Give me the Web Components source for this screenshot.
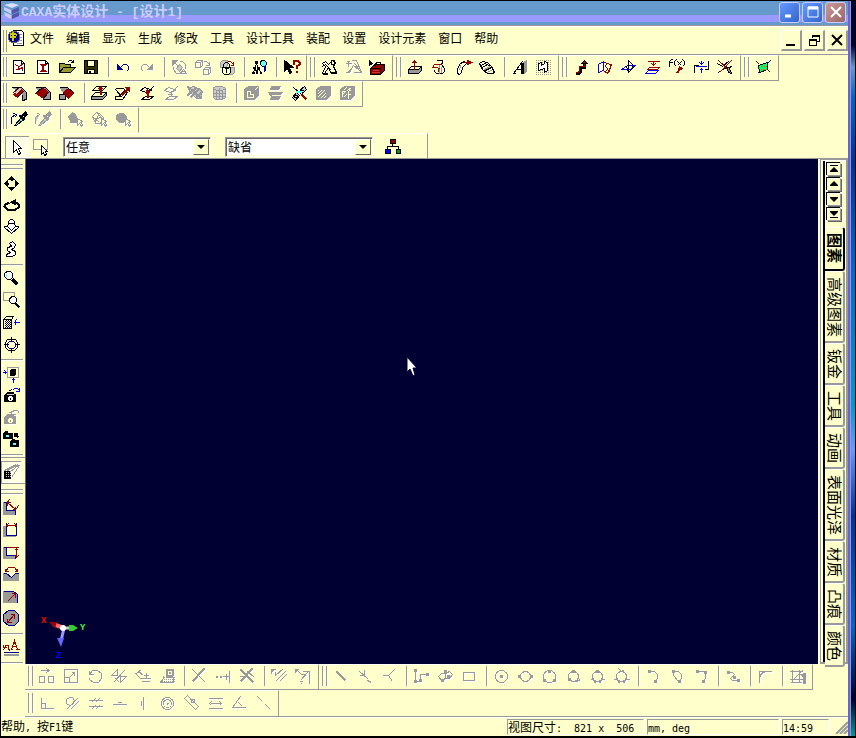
<!DOCTYPE html>
<html lang="zh-CN">
<head>
<meta charset="utf-8">
<title>CAXA实体设计 - [设计1]</title>
<style>
html,body{margin:0;height:100%}
body{background:#000;font:12px/16px "Noto Sans CJK SC",sans-serif;color:#000;overflow:hidden}
</style>
</head>
<body>
<cad-app></cad-app>
<script>
const COLORS={K:'currentColor',R:'#990000',B:'#000099',G:'#999999',W:'#ffffff',C:'#66ffff',Y:'#999933',N:'none',L:'#cccccc',P:'#ffffcc',U:'#0000ff',E:'#00ff66',D:'#333300',S:'#cc3333'};
/* Each icon is a list of "path|stroke|fill|width" strokes on an 18-cell grid. */
const ICONS={
new:['M3 2H11L14 5V15H3Z|K|W','M11 2V5H14','M5 6L8 8L11 7L12 5M8 8V11H5M8 11L12 9V12|R'],
new2:['M3 2H11L14 5V15H3Z|K|W','M11 2V5H14','M5 6H12M6 7H11M8 7V11M9 7V11M6 12H11M5 13H12|R'],
open:['M1 14V5H6L7 6H12V9|K|Y','M1 14L5 9H17L12 14Z|K|Y','M9 4L11 2H13L15 4M15 1V4H12'],
save:['M2 2H15V15H2Z|K|D','M5 2H12V8H5Z|K|P','M5 11H12V15H5Z|K|P','M7 12V14|K|N|2'],
undo:['M3 6V11H8Z|B|B','M6 9L9 6H12L14 8V11L12 13|B'],
redo:['M14 6V11H9Z|K|K','M11 9L8 6H5L3 8V11L5 13'],
orbit:['M2 2H7L2 7Z|K|K','M5 5L14 14M9 3H12L15 6V10L14 11M3 8V11L6 15H9L11 13M13 11L16 15H10Z','M6 10L9 13L12 9L9 6Z|K|L'],
boxes:['M1 4L3 2H8V7L6 9H1ZM1 4H6V9M6 4L8 2M9 11L11 9H16V14L14 16H9ZM9 11H14V16M14 11L16 9M9 3H12L15 6M15 3V7H11'],
boxlock:['M2 4L4 2H9V7L7 9H2ZM11 9H16V14L14 16H10V10|G|L','M9 3H12L15 6M15 3V7H12|R','M5 9V6L7 4H9L11 6V9|K','M4 9H12V14L10 16H6L4 14Z|K|P','M6 10H10M8 10V14'],
tree:['M5 3H7V5H5ZM3 9H5V10H3ZM7 9H9V10H7ZM2 14H4V15H2ZM6 14H7V15H6ZM10 14H11V15H10Z|K|K','M6 5L3 14M6 5L10 14M4 10L7 14M8 10L6 14|K','M11 2H14L16 4V6L14 8H12L10 6V4Z|K|C','M14 8L15 13|B|N|2'],
help:['M2 2V13L5 10L7 15L9 14L7 9H11Z|K|K','M11 6V3L13 2H15L17 4V6L14 8V10M14 12V14|R|N|2'],
vise:['M2 5L5 3L8 6L12 2L15 4L13 8L16 14H10L8 9L4 15H2L5 8Z|K|P','M2 8L5 6L11 12M11 2H14V6H11Z','M2 15H7M10 14H16|K|N|2'],
vise2:['M2 3H5M1 5H7M4 2V8M7 2L12 2L17 14L14 11L9 7L5 14H1M10 5L15 11M3 14L8 9M9 14H16'],
redbox:['M1 2L4 5L1 7Z|K|K','M2 10L6 6H16V12L12 16H2Z|K|R','M2 10H12V16M12 10L16 6','M6 8L8 4H12L13 7','M4 12H10M3 14H11|S'],
extrude:['M2 11L5 8H15V12L12 15H2Z|K|G','M2 11L5 8H15L12 11Z|K|P','M8 11V2M5 5L8 2L11 5M6 4H10|R'],
spin:['M6 2H12V4L11 6L14 10V13L12 15H6L4 13V11|K|P','M9 5V15M11 8V14|G','M10 6H4L2 9H7L10 11M8 9V13|R'],
sweep:['M3 15V10L6 5L10 3L12 5L8 9L7 14L5 16Z|K|P','M6 7L5 12|G','M9 4H15M13 2L17 4L13 6Z|R'],
loft:['M1 5L4 3L9 4L13 8L16 14L14 15H9L4 11Z|K|P','M3 7L6 5L9 6M4 9L9 6L12 8M7 12L13 9|K','M6 11L12 8M9 14L14 11|G'],
text:['M2 15H5M3 15L12 3L13 4V15M10 15H14M6 11H12','M12 4V15M11 5V14','M13 4L16 2V13L14 15|G|G'],
emboss:['M1 2H17M1 4H17M1 6H17M1 8H17M1 10H17M1 12H17M1 14H17M1 16H17|G|N|1|dash','M4 5L7 4V7L10 5V3L13 4V12L10 14V10L4 12Z|K|W'],
curve:['M3 15H6L8 13V9H12V4|K|N|3','M3 14H6L7 12V8H12V5|R|N|1','M9 5L12 2L15 5Z|K|R'],
sheet:['M2 6L7 3V12L2 14Z|U|P','M7 3L10 5L15 6L11 15L7 12|R|P','M10 5L9 8L11 10L10 13M15 6L12 15|R'],
plane:['M1 11H10L15 7H7Z|U','M8 14V2M8 2L12 6V10L8 14M6 8L8 14|K'],
offset:['M3 3H15M9 3V7M7 5L9 7L11 5|R','M3 11L5 9H15L13 11Z|R|P','M1 15L4 12H14L11 15Z|U|P'],
fx:['M1 8V3L3 1H4M0 4H4M8 1L6 3V6L8 8M9 3L13 7M13 3L9 7M14 1L16 3V6L14 8|K','M7 14H10V10H13M11 8L14 10L11 12Z|R|R'],
mid:['M2 14V7H6M12 11H16V2|K','M3 8H14|U','M9 2V6M7 4L9 6L11 4M9 14V10M7 12L9 10L11 12|U'],
trimc:['M1 5L6 8L13 2M2 14L8 10L16 8|K','M2 2L14 13M15 2L3 14|R','M10 8L13 10L15 15L12 14Z|K|Y'],
green:['M2 3L5 6M16 14L13 11|R','M16 2L13 5M3 15L6 12|U','M4 7L13 4V11L5 14Z|K|E','M6 8H12M6 11H12|Y'],
blend:['M1 3H11L16 8V15L12 16V10|K|G','M3 10L9 3L13 7L7 13Z|R|R','M2 9L8 3H11M7 13L13 7','M5 9L10 4|L|N|2'],
chamfer:['M1 3H11L16 8V15H9V13|K|G','M2 9L8 3L14 8L9 14Z|R|R','M1 9L8 3M9 14L14 8'],
shell:['M1 3H9L15 8L10 14L5 9M1 10H7V15H1Z|K|G','M5 8L10 4L15 9L10 14Z|R|R','M1 3H9L15 8'],
pull:['M1 12L5 8H16V11L12 15H1Z|K|G','M1 12L5 8H16L12 12Z|K|P','M2 6L6 2H16L12 6Z|K|P','M10 10V3M8 5L10 3L12 5|R|N|2'],
tilt:['M1 4H9L13 8L8 15H1V12H7L1 5M4 12L10 6L13 9|K|P','M7 11L14 4|R|N|2','M11 3H15V7Z|R|R'],
match:['M2 6L6 3L12 5L15 2M2 6L8 8L14 5M3 15L7 12H15L11 15Z|K|P','M9 13V6M7 9L9 6L11 9|R|N|2'],
match2:['M2 6L6 3L12 5L15 2M2 6L8 8L14 5M3 15L7 12H15L11 15ZM9 12V7M5 10H10'],
hatch:['M2 4L7 2L15 6V14H10L4 8Z|K|L','M1 2L15 14M1 11L10 3M4 13L13 4M9 14L16 7|K|N|2'],
cyl:['M3 3L6 2H12L15 4V13L12 15H5L3 13Z|K|L','M3 4L6 6H12L15 4M3 9H15M6 6V14M9 3V15M12 6V14M3 12H15'],
shellL:['M2 5L6 2H16V11L12 15H2Z|K|K','M5 7H8V10H11V13H5Z|P|N|1','M12 6L15 3|P'],
layers:['M5 2H14L12 5H4ZM2 8H16L13 11H4ZM5 12H14L12 15H4Z|K|K','M4 7H14M5 11H14|P'],
satellite:['M2 13L6 8L9 11L5 16ZM10 5L14 2L16 5L12 9Z|K|L','M3 12L7 14M4 10L8 12M11 5L14 7|K','M3 3L15 13|K','M6 7L12 8|C|N|2','M11 10L16 15|R|N|2'],
cubeh:['M2 5L6 2H16V11L12 15H2Z|K|K','M3 7L4 6M3 10L7 6M3 13L10 6M6 14L11 9M9 14L11 12|P'],
cubee:['M2 5L6 2H16V11L12 15H2Z|K|K','M4 12V7H7M4 10L7 7M5 13L8 10M10 6V14M10 6H12M10 10H12M8 3L5 6M13 3L9 6|P'],
dropper:['M1 13V7M1 7L5 4M3 3L6 4L5 7|B','M4 15L11 7L13 9L6 15Z|K|C','M9 5L14 10M11 6L15 2L16 4L13 8|K|N|2'],
dropper2:['M1 13V7L5 4M3 3L6 4M4 15L11 7L13 9L6 15Z|K|L','M9 5L14 10M11 6L15 2L16 4L13 8|K|N|2'],
pick1:['M2 6L6 2L9 4L10 8L12 9L10 12H4V10Z|K|K','M11 8V15L13 13L15 16L16 14L14 12L16 11Z|K|P'],
pick2:['M2 6L6 2L9 3L13 7L10 13H5Z|K|P','M2 6L9 12M6 2L12 8M9 3L4 12M12 7L5 8','M11 8V15L13 13L15 16L16 14L14 12L16 11Z|K|P'],
pick3:['M2 5L5 3H9L12 6V9L9 12H5L2 9Z|K|K','M11 8V15L13 13L15 16L16 14L14 12L16 11Z|K|P'],
pointer:['M5 2V14L8 11L10 16L12 15L10 10H13Z|K|W'],
boxsel:['M1 1H15V11H1Z|G','M9 7V16L11 14L12 17L14 16L13 13H15Z|K|W'],
net:['M6 1H11V5H6Z|K|R','M8 5V8M3 11V8H14V11','M1 11H6V15H1Z|K|U','M12 11H16V15H12Z|K|#009900'],
pan:['M9 3V6M9 12V15M3 9H6M12 9H15|K|N|2','M6 5L9 2L12 5ZM6 13L9 16L12 13ZM5 6L2 9L5 12ZM13 6L16 9L13 12Z|K|K'],
rotate:['M7 6L3 8L2 10L5 13H13L16 11V8L14 6|K|N|2','M8 6L13 3V8Z|K|K'],
zoomfwd:['M6 5V3L8 1H10L12 3V5Z|K|W','M6 5L5 8H2V9L9 15L16 9V8H13L12 5|K|W','M6 9L9 12L12 9'],
walk:['M7 3L10 1L13 4L12 7L9 9L13 11V14L10 16H4V14L8 12L5 10V7L9 6L8 4Z|K|W'],
zoom:['M3 3L5 2H8L10 4V8L8 10H5L2 7V4Z|K|W','M4 4V7|C','M10 10L15 15|K|N|3'],
zoombox:['M1 1H12V9H1Z|G','M8 6L10 5H12L14 7V10L12 12H9L7 10V8Z|K|W','M13 12L17 16|K|N|2'],
look:['M1 6L4 3H11L9 6V15H1Z|K|P','M1 6H9','M2 8H9M2 10H9M2 12H9M2 14H9|B|N|1|dash','M3 7H8M3 9H8M3 11H8M3 13H8|K|N|1|dash','M12 9H17M14 6L12 9L14 12|U'],
target:['M9 1V6M9 12V17M1 9H6M12 9H17|K','M5 4H13L15 7V12L12 15H6L3 12V7Z|K','M7 6H11L13 8V11L11 13H7L5 11V8Z|B'],
camin:['M5 3H16V13H5Z|G','M8 6L10 5H13V10L11 11H8Z|K|K','M0 8H4M2 6L4 8L2 10M11 14V18M9 16L11 14L13 16|U'],
cam:['M2 9L5 6H11V8H13V15H2ZM7 4L10 3|K|K','M5 11L7 9H9L11 11V13L9 15H7L5 13Z|K|W','M8 11V13','M4 8H11|L','M10 4L12 2H15L17 4M17 1V5H13|U'],
cam2:['M2 9L5 6H11V8H13V15H2ZM7 4L10 3|K|K','M5 11L7 9H9L11 11V13L9 15H7L5 13Z|K|P','M8 11V13','M17 5L15 2H11L10 4M9 2V6H13'],
camswap:['M1 3L3 1H5V3H10V8H1ZM8 11L10 9H12V10H16V16H8Z|K|K','M3 4H7V7H3ZM10 12H14V15H10Z|K|C','M12 3L16 7M12 3H15M12 3V6|K|N|2'],
spot:['M2 8H8V15H2Z|K|K','M3 9H8M3 11H8M3 13H8|L|N|1|dash','M2 7L14 1M8 8L17 1M9 14L17 2M5 7L16 1|G'],
dim1:['M1 3H4V11H13V15H1Z|G|G','M1 3H4V11H13V15|B','M5 3L13 10M5 6V3H8M13 7V10H10M7 0L4 4M16 6L12 12|R'],
dim2:['M1 5H4V14H13V15H1Z|G|G','M4 14V1M14 14V1M4 14H14|B','M4 4H14M6 2L4 4L6 6M12 2L14 4L12 6|R'],
dim3:['M1 4H4V12H13V15H1Z|G|G','M1 4H4V12H13V15|B','M4 4H16M14 5V14M12 7L14 5L16 7M12 12L14 14L16 12|R'],
dim4:['M1 8H4L9 12L13 8H16V15H1Z|G|G','M1 8H4L9 12L13 8H16|B','M3 6L6 2H12L15 6M3 3V6H6M15 3V6H12|R'],
rad:['M1 4H11L15 7V15H1Z|G|G','M1 4H11L15 7V15|B','M5 14L13 6M9 6H13V10|R'],
dia:['M6 1H12L16 5V12L12 16H6L1 12V5Z|B|G','M5 13L12 5M8 5H12V9M5 9V13H9|R'],
note:['M1 14H16|B','M1 16H16|G|N|2','M1 12L3 7M1 6V9H4M3 7H6V11L8 12M8 11H10M9 11L12 2L15 11M10 8H14M13 11H17M12 2V5|R'],
move:['M1 9H6V15H1ZM10 9H15V15H10ZM2 3H10M8 1L11 3L8 5'],
scale:['M2 2H15V15H2ZM2 10H7V15M7 10L12 5M9 5H12V8'],
rot:['M3 3V7H7M3 7L6 3H11L15 6V11L12 15H7L3 12V10'],
mirror:['M1 8L7 2V8ZM10 15L16 9H10ZM3 15L14 3M5 11L9 15'],
offs:['M2 6L7 2M1 6L6 11H16M4 4L9 8M12 5V10M9 8H14M7 14H15'],
stamp:['M8 2H15V8L13 10H8Z|K|K','M10 4H13V7H10Z|P','M5 10H16M3 12H16M1 14H16|K|N|1|dash','M5 8V11L2 15H15V9'],
x:['M2 2L15 15|K','M14 1L2 14|K|N|2'],
ext:['M1 9H3M5 9H7|K|N|2','M8 9H15M12 6V12M15 3V15|K'],
xx:['M2 2L15 15M14 1L2 14|K|N|2','M1 9L6 9M9 4L16 10'],
proj:['M1 2H5M1 2V6M5 4V8L13 1M5 14L15 4M9 14L16 7|K','M1 2V5L4 2Z|K|K'],
proj2:['M2 2L7 7H10M8 4H15V15M6 13L14 4|K','M1 2V5L4 2Z|K|K','M7 11V16M5 14H9M15 13V16|K|N|1|dash'],
line:['M4 4L13 13|K|N|2'],tan:['M3 4L12 12M8 2V8H3M11 13L15 15'],perp:['M2 8H8L14 2M8 8L12 14'],
poly:['M3 3V14H8V7H15|K','M2 2H4V4H2ZM2 13H4V15H2ZM7 12H9V14H7ZM14 6H16V8H14Z|K|K'],
spline:['M9 11L5 13L2 9L5 6L8 6M9 4L9 11M9 6L13 4L16 7L13 11H9|K','M8 3H10V5H8ZM5 12H7V14H5ZM11 8H13V10H11Z|K|K'],
rect:['M3 5H14V13H3Z|K'],
circ:['C|6','M8 8H10V10H8Z|K|K'],circ2:['C|5','M2 8H4V10H2ZM14 8H16V10H14Z|K|K'],circ3:['C|6','M8 3H10V5H8ZM3 12H5V14H3ZM13 12H15V14H13Z|K|K'],
circ4:['C|5','M8 3H10V5H8ZM4 11H6V13H4Z|K|K','M12 14L16 12'],circ5:['C|5','M8 3H10V5H8Z|K|K','M2 12H5L7 16M16 12H13L11 16'],circ6:['C|5','M6 1L9 4L12 2M1 12H5L7 16M17 12H13L11 16'],
arc:['M5 4H10L13 7V11L11 14','M4 3H6V5H4ZM10 13H12V15H10Z|K|K'],arc2:['M4 4H10L13 7V11L10 14L5 8V4','M4 3H6V5H4ZM10 13H12V15H10Z|K|K'],arc3:['M4 4H13V11L10 14','M4 3H6V5H4ZM12 4H14V6H12ZM10 13H12V15H10Z|K|K'],
bez:['M4 5H8L10 7L6 11L8 13H13','M3 4H5V6H3ZM9 9H11V11H9ZM13 12H15V14H13Z|K|K'],
fillet:['M3 15V4H15M3 10L5 6L9 4'],snap:['M1 4H14M1 12H17M4 2V15M11 2V15M5 12L14 3M2 15H13','M12 7L15 10V16H17V5|K|K'],
ang:['M3 3V14H15M3 9H7V14'],tang:['M4 5L7 3H10L12 6L10 10L7 11L4 9ZM4 15L15 4M8 15L16 7'],par:['M2 6H16M2 12H16M5 8L9 4M9 8L13 4M5 15L9 11M9 15L13 11'],
hor:['M2 10H16M7 8H11'],ver:['M9 2V15M7 6V11'],conc:['C|6','C|4','M8 9H10M9 8V10'],eq:['M2 4L5 1L16 12L13 15Z','M7 5H12V8H9V5'],eqd:['M2 4H16M4 9H14M2 14H16M5 7L3 9L5 11M13 7L15 9L13 11'],angle:['M15 13H2L10 2M8 8L12 12'],col:['M3 2L8 7M11 10L16 15']
};
const svg=(name)=>`<svg width="18" height="18" viewBox="-0.5 -0.5 18 18" shape-rendering="crispEdges" aria-hidden="true">${ICONS[name].map(s=>{
 const [d,st='K',f='N',w='1',x]=s.split('|');
 if(d==='C')return `<circle cx="9" cy="9" r="${st}" fill="none" stroke="currentColor"/>`;
 const c=v=>COLORS[v]||v;
 return `<path d="${d}" stroke="${c(st)}" fill="${c(f)}" stroke-width="${w}"${x?' stroke-dasharray="1 1"':''}/>`}).join('')}</svg>`;
const define=(tag,html,setup)=>{
 const t=document.createElement('template');t.innerHTML=html;
 customElements.define(tag,class extends HTMLElement{
  connectedCallback(){if(this.shadowRoot)return;this.attachShadow({mode:'open'}).append(t.content.cloneNode(true));setup&&setup(this,this.shadowRoot)}
 });
};
define('tool-button',`<style>
:host{display:block;width:24px;height:22px;flex:none}
button{display:flex;align-items:center;justify-content:center;width:100%;height:100%;margin:0;padding:0;border:0;background:none;color:#000}
button:disabled{color:#999}
button:disabled svg{filter:drop-shadow(1px 1px 0 #fff)}
:host([pressed]) button{box-shadow:inset 1px 1px #999,inset -1px -1px #fff;background:#ffffe6}
svg{display:block;overflow:visible;flex:none}
</style><button type="button"></button>`,(h,r)=>{const b=r.querySelector('button'),n=h.getAttribute('icon');b.innerHTML=svg(n);b.setAttribute('aria-label',n);b.disabled=h.hasAttribute('disabled')});

define('tool-bar',`<style>
:host{display:flex;flex:none;box-sizing:border-box;height:26px;padding:0 3px 2px 3px;border-top:1px solid #fff;border-bottom:1px solid #999;border-right:1px solid #999;align-items:center}
:host([first]){padding-left:2px}
:host([first]) .grip{width:4px;margin-right:0}
:host([lower]){padding-left:3px}
.grip{box-sizing:border-box;width:5px;height:20px;margin-right:2px;border:solid #999;border-width:0 1px;box-shadow:inset 1px 0 #fff,1px 0 #fff;flex:none}
.sep{width:1px;height:20px;margin:0 2px 0 5px;background:#999;box-shadow:1px 0 #fff;flex:none}
:host([vertical]){flex-direction:column;height:auto;width:24px;padding:0;border:0;align-items:flex-start}
:host([vertical]) .grip{width:22px;height:5px;margin:5px 0 3px;border-width:1px 0;box-shadow:inset 0 1px #fff,0 1px #fff}
:host([vertical]) .sep{width:22px;height:1px;margin:4px 0 2px;box-shadow:0 1px #fff}
:host([vertical]) tool-button{width:20px}
:host([nogrip]) .grip{display:none}
:host([nogrip]){padding-top:3px;border-top:1px solid #999;border-bottom:1px solid #999}
</style><div class="grip"></div>`,(h,r)=>{
 for(const i of h.getAttribute('items').split(' ')){
  if(i==='|'){const s=document.createElement('div');s.className='sep';r.append(s);continue}
  const b=document.createElement('tool-button');
  if(i[0]==='-')b.setAttribute('disabled','');
  if(i[0]==='+')b.setAttribute('pressed','');
  b.setAttribute('icon',i.replace(/^[-+]/,''));r.append(b);
 }});

define('title-bar',`<style>
:host{display:flex;align-items:center;height:24px;flex:none;background:linear-gradient(#69c 0 14px,#99f 14px 21px,#69c 21px);color:#ccf;font-weight:bold;font-size:14px;line-height:20px;padding:0 2px 0 3px;box-shadow:0 1px #999}
h1{font:inherit;margin:-3px auto 0 1px;white-space:pre}
span{font-family:"Liberation Mono",monospace;font-size:13px}
button{width:21px;height:21px;padding:0;margin:-2px 0 0 2px;border:1px solid #ccf;border-radius:3px;background:linear-gradient(135deg,#69f,#36c);color:#fff}
button.close{background:linear-gradient(135deg,#c99,#966)}
svg{display:block;margin:auto}
.logo{margin:-4px 0 0}
</style><svg class="logo" width="16" height="18" viewBox="0 0 16 18"><path d="M0 3L8 1L15 3L8 6Z" fill="#ddf"/><path d="M0 5L7 8V12L0 8ZM0 10L7 13V17L1 14Z" fill="#ccf"/><path d="M8 8L15 5V9L8 12ZM8 13L15 10V14L8 17Z" fill="#55a"/></svg>
<h1><span>CAXA</span>实体设计<span> - [</span>设计<span>1]</span></h1>
<button aria-label="最小化"><svg width="16" height="16"><path d="M3 12H9" stroke="#fff" stroke-width="3"/></svg></button><button aria-label="最大化"><svg width="16" height="16"><path d="M3 3H13V13H3Z" fill="none" stroke="#fff"/><path d="M3 4H13" stroke="#fff" stroke-width="3"/></svg></button><button class="close" aria-label="关闭"><svg width="16" height="16"><path d="M3 3L13 13M13 3L3 13" stroke="#fff" stroke-width="2"/></svg></button>`);

define('menu-bar',`<style>
:host{display:flex;align-items:center;flex:none;margin-top:1px;border-top:1px solid #fff;border-bottom:1px solid #999;padding-left:2px;box-sizing:border-box;height:29px}
.grip{box-sizing:border-box;width:4px;height:22px;border:solid #999;border-width:0 1px;margin-right:1px}
nav{display:flex;margin-right:auto;margin-top:-5px}
nav button{border:0;background:none;padding:0 6px;margin:0;font:inherit;line-height:18px;color:#000;white-space:nowrap}
.w{box-sizing:border-box;width:21px;height:21px;padding:0;border:solid;border-width:1px 2px 2px 1px;border-color:#fff #999 #999 #fff;background:#ffc;margin-left:2px}
.w svg{display:block;margin:auto}
.doc{margin-top:-5px}
</style><div class="grip"></div><svg class="doc" width="16" height="18" shape-rendering="crispEdges"><path d="M5 1H13L15 3V16H5Z" fill="#fff" stroke="#000"/><path d="M12 5H14M12 8H14M11 11H14M9 14H14" stroke="#999"/><circle cx="6" cy="8" r="6" fill="#009" stroke="#666"/><path d="M5 4V12M2 6L5 4L9 6M2 8H8" stroke="#cc0" stroke-width="2" fill="none"/></svg>
<nav></nav>
<button class="w" aria-label="最小化"><svg width="14" height="14"><path d="M2 12H11" stroke="#000" stroke-width="2"/></svg></button><button class="w" aria-label="还原"><svg width="14" height="14" shape-rendering="crispEdges"><path d="M5 2H12V8H10M5 2V5M5 3H12M2 6H9V12H2ZM2 7H9" stroke="#000" fill="none"/></svg></button><button class="w" aria-label="关闭"><svg width="14" height="14"><path d="M2 2L12 12M12 2L2 12" stroke="#000" stroke-width="2"/></svg></button>`,(h,r)=>{
 r.querySelector('nav').innerHTML='文件 编辑 显示 生成 修改 工具 设计工具 装配 设置 设计元素 窗口 帮助'.split(' ').map(t=>`<button type="button">${t}</button>`).join('')});

define('combo-box',`<style>
:host{display:flex;position:relative;width:148px;height:20px;box-sizing:border-box;border:1px solid;border-color:#999 #fff #fff #999;background:#fff;flex:none;box-shadow:inset 1px 1px #666,inset -1px -1px #ffc}
select{appearance:none;width:100%;border:0;background:none;font:inherit;padding:0 18px 0 2px;margin:0;color:#000;outline:0}
i{position:absolute;right:1px;top:1px;width:16px;height:16px;box-sizing:border-box;background:#ffc;border:1px solid;border-color:#fff #666 #666 #fff;pointer-events:none;display:flex;align-items:center;justify-content:center}
i::before{content:"";border:solid transparent;border-width:4px 4px 0;border-top-color:#000}
</style><select></select><i></i>`,(h,r)=>{const s=r.querySelector('select');s.setAttribute('aria-label',h.getAttribute('label'));s.add(new Option(h.getAttribute('value')))});

define('select-bar',`<style>
:host{display:flex;flex:none;height:26px;border-bottom:1px solid #999;box-sizing:border-box;align-items:center}
.in{display:flex;align-items:center;box-sizing:border-box;width:427px;height:25px;padding:2px 0 0 4px;border-top:1px solid #fff;border-right:1px solid #999}
.a{margin-right:10px}.b{margin-right:14px}.n{margin-left:8px}
</style><div class="in"><tool-button pressed icon="pointer"></tool-button><tool-button class="a" icon="boxsel"></tool-button><combo-box class="b" label="选择过滤" value="任意"></combo-box><combo-box label="配置" value="缺省"></combo-box><tool-button class="n" icon="net"></tool-button></div>`);

define('design-view',`<style>
:host{display:block;position:relative;background:#003;flex:1;min-width:0;border-left:1px solid #666}
svg{position:absolute}
.axes{left:13px;bottom:4px}.cur{left:48%;top:39%}
text{font:bold 9px "Liberation Mono",monospace}
</style><svg class="axes" width="52" height="50" viewBox="0 0 52 50"><path d="M25 18L14 14" stroke="#f66" stroke-width="4"/><path d="M10 12L18 12L16 18Z" fill="#900"/><path d="M25 18L22 31" stroke="#99f" stroke-width="3"/><path d="M18 28L25 28L22 37Z" fill="#66f"/><path d="M25 18H32" stroke="#ccc" stroke-width="3"/><path d="M30 15H34L39 18L34 21H30Z" fill="#3c3"/><circle cx="24" cy="18" r="3" fill="#fff"/><text x="2" y="13" fill="#f00">X</text><text x="41" y="20" fill="#3f3">Y</text><text x="17" y="48" fill="#00f">Z</text></svg>
<svg class="cur" width="13" height="21"><path d="M1 1V16L4 13L7 20L9 19L7 12H11Z" fill="#fff" stroke="#003"/></svg>`);

define('catalog-panel',`<style>
:host{display:flex;flex-direction:column;box-sizing:border-box;width:28px;flex:none;margin-left:2px;border:solid #999;border-width:1px 2px 2px 1px;box-shadow:inset 1px 1px #fff;padding:1px 3px 0 2px}
.in{flex:1;display:flex;flex-direction:column;border-left:2px solid #000;min-height:0}
.nav{margin-left:2px;padding:2px 0 4px;height:60px}
.nav button{display:block;box-sizing:border-box;width:14px;height:13px;margin:0 0 2px;padding:0;background:#ffc;border:1px solid;border-color:#fff #999 #999 #fff;box-shadow:-1px -1px #000,1px 1px #666}
.nav svg{display:block;margin:auto}
.tab{flex:none;box-sizing:border-box;writing-mode:vertical-rl;text-orientation:sideways;width:20px;border:0;border-right:2px solid #999;border-top:1px solid #fff;border-bottom:2px solid #999;border-radius:0 3px 3px 0;background:#ffc;padding:5px 0 5px 2px;margin:0;font:inherit;font-size:15px;line-height:16px;color:#000;white-space:nowrap;height:42px;text-align:center}
.tab.on{font-weight:bold;border-color:#fff #000 #000;height:44px}
.tab.l{height:72px}
</style><div class="in"><div class="nav"></div></div>`,(h,r)=>{
 const p=['M2 1H10V2H2ZM6 3L10 7V8H2V7Z','M6 2L10 6V7H2V6Z','M6 8L10 4V3H2V4Z','M2 8H10V9H2ZM6 7L10 3V2H2V3Z'];
 r.querySelector('.nav').innerHTML=p.map((d,i)=>`<button type="button" aria-label="翻页${i+1}"><svg width="12" height="11"><path d="${d}"/></svg></button>`).join('');
 '图素 高级图素 钣金 工具 动画 表面光泽 材质 凸痕 颜色'.split(' ').forEach((t,i)=>{const b=document.createElement('button');b.type='button';b.className='tab'+(i?'':' on')+(t.length>2?' l':'');b.textContent=t;r.querySelector('.in').append(b)})});

define('status-bar',`<style>
:host{display:flex;flex:none;align-items:center;height:19px;gap:3px;box-sizing:border-box;border-top:1px solid #fff}
.msg{flex:1}
div{white-space:pre;line-height:14px}
.p{box-sizing:border-box;height:16px;border:1px solid;border-color:#999 #fff #fff #999}
span{font:10px/14px "DejaVu Sans Mono",monospace}
svg{flex:none;margin-left:2px}
</style><div class="msg">帮助<span>, </span>按<span>F1</span>键</div><div class="p" style="width:137px">视图尺寸<span>:  821 x  506</span></div><div class="p" style="width:132px"><span>mm, deg</span></div><div class="p" style="width:47px"><span>14:59</span></div><svg width="14" height="14"><path d="M2 14L14 2M6 14L14 6M10 14L14 10" stroke="#999" stroke-width="2"/></svg>`);

define('cad-app',`<style>
:host{display:flex;box-sizing:border-box;height:100vh;padding:1px 1px 2px 1px;background:#000}
.win{flex:1;min-width:0;display:flex;flex-direction:column;background:#ffc}
.row{display:flex;flex:none}
.mid{flex:1;display:flex;min-height:0}
.left{width:24px;flex:none}
.main{flex:1;min-width:0;display:flex;flex-direction:column}
.view{flex:1;display:flex;min-height:0}
.edge{width:7px;flex:none;background:linear-gradient(90deg,#66c 0 2px,#99c 2px 3px,transparent 3px),linear-gradient(#003 0 6%,#69c 9%,#06c 13%,#039 22%,#06c 36%,#09c 55%,#69f 61%,#039 70%,#06c 85%,#003 95%,#099)}
.bottom{border-bottom:1px solid #999}
.bottom .row:last-child tool-bar{border-bottom:0}
</style><div class="win"><title-bar></title-bar><menu-bar></menu-bar>
<div class="row"><tool-bar first items="new new2 open save | undo -redo | -orbit -boxes boxlock | tree | help"></tool-bar><tool-bar items="vise -vise2 redbox"></tool-bar><tool-bar items="extrude spin sweep loft | text emboss"></tool-bar><tool-bar items="curve sheet plane offset fx mid trimc"></tool-bar><tool-bar items="green"></tool-bar></div>
<div class="row"><tool-bar first items="blend chamfer shell | pull tilt match -match2 -hatch -cyl | -shellL -layers satellite -cubeh -cubee"></tool-bar></div>
<div class="row"><tool-bar first style="border-bottom-color:#ffc" items="dropper -dropper2 | -pick1 -pick2 -pick3"></tool-bar></div>
<select-bar></select-bar>
<div class="mid"><div class="left">
<tool-bar vertical items="pan rotate zoomfwd walk | zoom zoombox look target | camin cam -cam2 camswap |"></tool-bar><tool-bar vertical nogrip items="+spot"></tool-bar><tool-bar vertical items="dim1 dim2 dim3 dim4 rad dia | note |"></tool-bar></div>
<div class="main"><div class="view"><design-view></design-view><catalog-panel></catalog-panel></div>
<div class="bottom"><div class="row"><tool-bar lower items="-move -scale -rot -mirror -offs -stamp | -x -ext -xx | -proj -proj2"></tool-bar><tool-bar items="-line -tan -perp | -poly -spline -rect | -circ -circ2 -circ3 -circ4 -circ5 -circ6 | -arc -arc2 -arc3 | -bez | -fillet | -snap"></tool-bar></div>
<div class="row"><tool-bar lower items="-ang -tang -par -hor -ver -conc -eq -eqd -angle -col"></tool-bar></div></div></div></div>
<status-bar></status-bar></div><div class="edge"></div>`);
</script>
</body>
</html>
